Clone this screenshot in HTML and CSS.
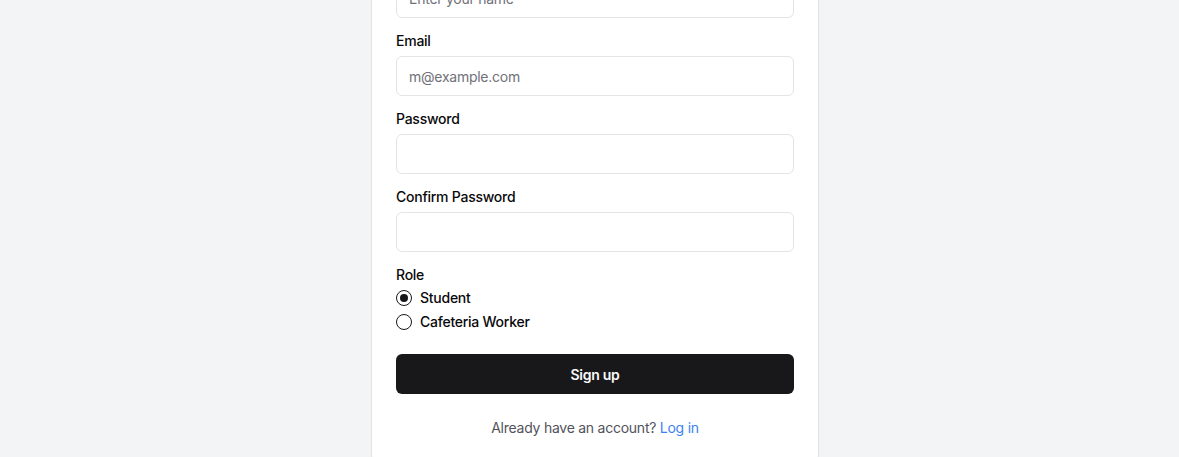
FILE: index.html
```html
<!DOCTYPE html>
<html lang="en">
<head>
<meta charset="utf-8">
<title>Sign up</title>
<link rel="stylesheet" href="styles.css">
</head>
<body>
<div class="page">
  <div class="card">
    <form class="form">
      <div class="field">
        <label class="label">Name</label>
        <input class="input" type="text" placeholder="Enter your name">
      </div>
      <div class="field">
        <label class="label">Email</label>
        <input class="input" type="email" placeholder="m@example.com">
      </div>
      <div class="field">
        <label class="label">Password</label>
        <input class="input" type="password">
      </div>
      <div class="field">
        <label class="label">Confirm Password</label>
        <input class="input" type="password">
      </div>
      <div class="field">
        <span class="label">Role</span>
        <div class="radios">
          <label class="radio-item"><span class="radio checked"></span><span>Student</span></label>
          <label class="radio-item"><span class="radio"></span><span>Cafeteria Worker</span></label>
        </div>
      </div>
      <button class="button" type="button">Sign up</button>
    </form>
    <p class="footer">Already have an account? <a class="link" href="#">Log in</a></p>
  </div>
</div>
</body>
</html>
```
FILE: styles.css
```css
* { box-sizing: border-box; }
html, body { margin: 0; padding: 0; }
body {
  background: #f3f4f6;
  font-family: Inter, "Liberation Sans", sans-serif;
  color: #09090b;
  letter-spacing: -0.25px;
  height: 457px;
  overflow: hidden;
}
.page {
  display: flex;
  justify-content: center;
  padding-left: 11px;
  margin-top: -69px;
}
.card {
  width: 448px;
  background: #ffffff;
  border: 1px solid #e4e4e7;
  border-radius: 8px;
  padding: 24px;
  box-shadow: 0 1px 2px rgba(0,0,0,0.04);
}
.form {
  display: flex;
  flex-direction: column;
  gap: 16px;
}
.field {
  display: flex;
  flex-direction: column;
  gap: 8px;
}
.label {
  font-size: 14px;
  line-height: 14px;
  font-weight: 500;
  color: #09090b;
}
.input {
  height: 40px;
  width: 100%;
  border: 1px solid #e4e4e7;
  border-radius: 6px;
  padding: 0 12px;
  font-family: inherit;
  font-size: 14px;
  letter-spacing: -0.25px;
  color: #09090b;
  background: #fff;
  outline: none;
}
.input::placeholder { color: #71717a; }
.radios {
  display: flex;
  flex-direction: column;
  gap: 8px;
}
.radio-item {
  display: flex;
  align-items: center;
  gap: 8px;
  height: 16px;
  font-size: 14px;
  font-weight: 500;
  line-height: 16px;
}
.radio {
  width: 16px;
  height: 16px;
  border: 1px solid #18181b;
  border-radius: 50%;
  display: flex;
  align-items: center;
  justify-content: center;
  flex: none;
}
.radio.checked::after {
  content: "";
  width: 8px;
  height: 8px;
  border-radius: 50%;
  background: #18181b;
}
.button {
  margin-top: 8px;
  height: 40px;
  border: none;
  border-radius: 6px;
  background: #18181b;
  color: #fafafa;
  font-family: inherit;
  font-size: 14px;
  font-weight: 600;
  letter-spacing: -0.25px;
}
.footer {
  margin: 24px 0 0;
  text-align: center;
  font-size: 14px;
  line-height: 20px;
  color: #52525b;
}
.link {
  color: #3b82f6;
  text-decoration: none;
}
```
